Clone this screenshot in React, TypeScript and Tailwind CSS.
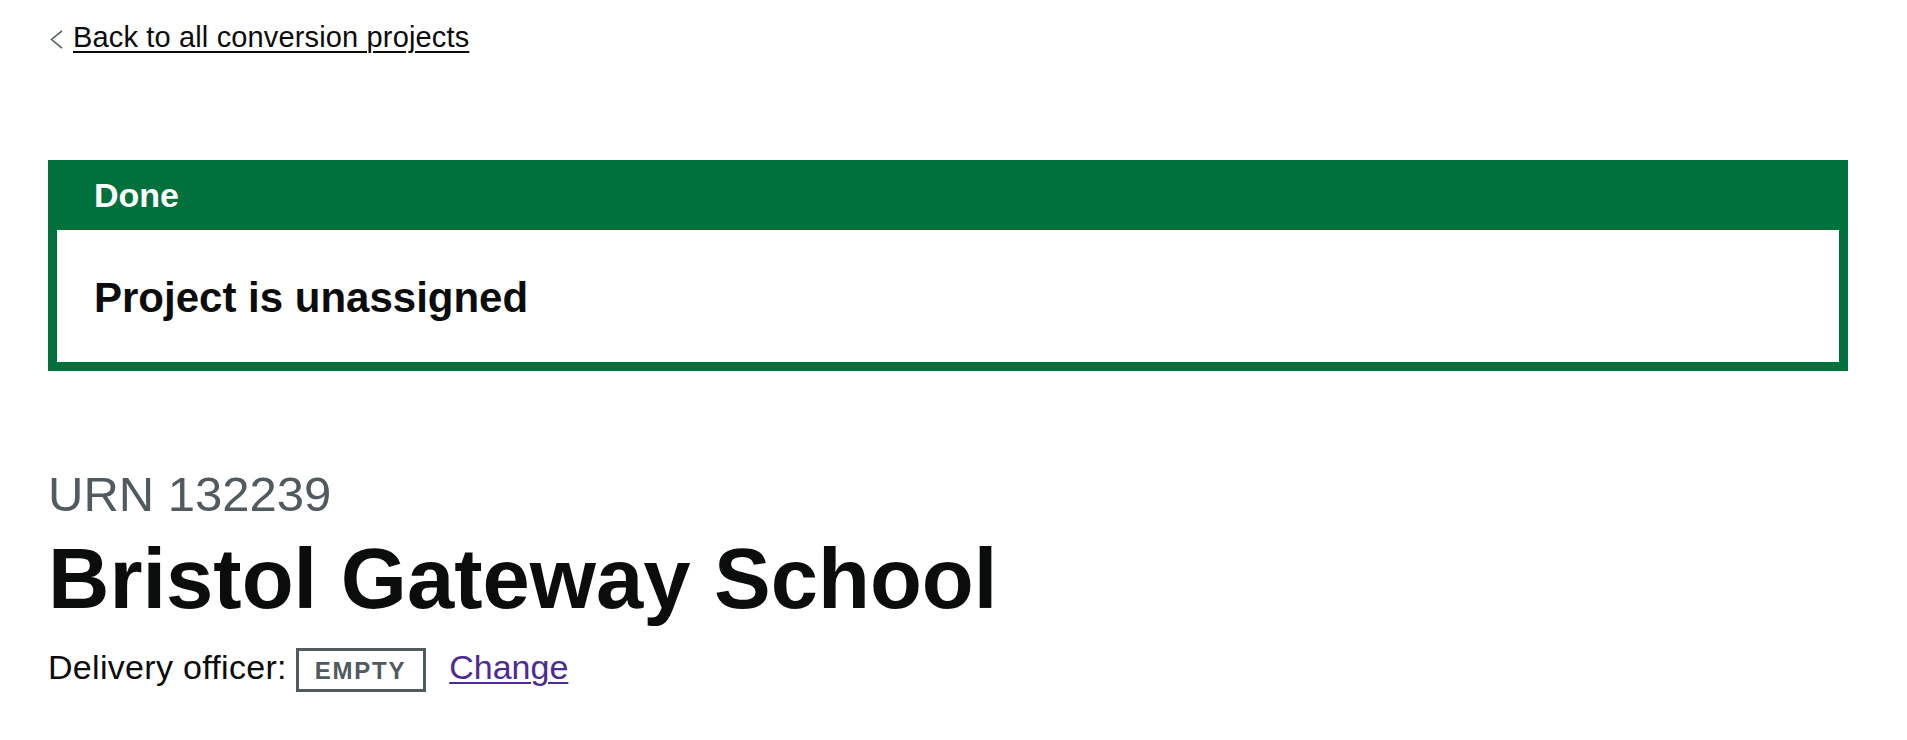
import React from "react";

export default function App() {
  return (
    <div
      className="min-h-[740px] w-[1907px] bg-white pl-[48px] pt-[23px] text-[#0b0c0c]"
      style={{ fontFamily: '"Liberation Sans", Arial, sans-serif' }}
    >
      {/* Back link */}
      <div className="flex items-start">
        <svg
          className="ml-[2px] mt-[7px] mr-[10px]"
          width="13"
          height="19"
          viewBox="0 0 13 19"
          fill="none"
        >
          <polyline
            points="12,0.8 1.5,9.5 12,18.2"
            stroke="#505a5f"
            strokeWidth="1.5"
            fill="none"
          />
        </svg>
        <a
          href="#"
          className="text-[29px] leading-[28px] tracking-[0.15px] text-[#0b0c0c] underline decoration-2 underline-offset-[4px]"
        >
          Back to all conversion projects
        </a>
      </div>

      {/* Notification banner */}
      <div className="mt-[109px] w-[1800px] border-[9px] border-[#00703c] bg-[#00703c]">
        <div className="pl-[37px] pt-[5px] pb-[13px]">
          <h2 className="text-[34px] font-bold leading-[43px] text-white">
            Done
          </h2>
        </div>
        <div className="bg-white pl-[37px] pt-[41px] pb-[38px]">
          <p className="text-[42px] font-bold leading-[53px] text-[#0b0c0c]">
            Project is unassigned
          </p>
        </div>
      </div>

      {/* Caption + heading */}
      <div className="mt-[95px] text-[49px] leading-[56px] text-[#505a5f]">
        URN 132239
      </div>
      <h1 className="mt-[12px] text-[85px] font-bold leading-[90px] text-[#0b0c0c]">
        Bristol Gateway School
      </h1>

      {/* Delivery officer row */}
      <div className="mt-[21px] text-[34px] leading-[44px] text-[#0b0c0c]">
        <span className="tracking-[0.3px]">Delivery officer:</span>
        <span className="ml-[9px] inline-block border-[3px] border-[#505a5f] pl-[16px] pr-[17px] pt-[8px] pb-[6px] text-[24px] font-bold uppercase leading-[24px] tracking-[1.75px] text-[#505a5f]">
          Empty
        </span>
        <a
          href="#"
          className="ml-[23px] text-[#4c2c92] underline decoration-2 underline-offset-[3px]"
        >
          Change
        </a>
      </div>
    </div>
  );
}
